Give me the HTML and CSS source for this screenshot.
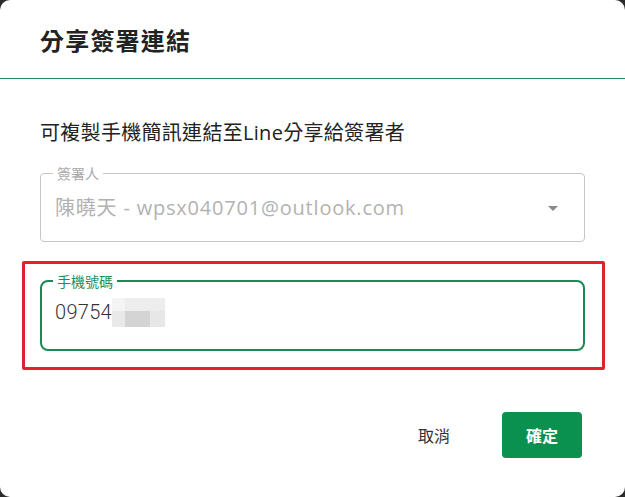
FILE: index.html
```html
<!DOCTYPE html>
<html lang="zh-Hant">
<head>
<meta charset="utf-8">
<title>分享簽署連結</title>
<link rel="stylesheet" href="styles.css">
</head>
<body>
<div class="dialog">
  <header class="dialog-header">
    <h2 class="dialog-title">分享簽署連結</h2>
  </header>
  <main class="dialog-body">
    <p class="hint">可複製手機簡訊連結至Line分享給簽署者</p>
    <fieldset class="field field-select">
      <legend class="field-label">簽署人</legend>
      <div class="field-row">
        <span class="select-value">陳曉天 - wpsx040701@outlook.com</span>
        <span class="caret"></span>
      </div>
    </fieldset>
    <div class="highlight">
      <fieldset class="field field-phone">
        <legend class="field-label">手機號碼</legend>
        <div class="field-row">
          <span class="phone-value">09754</span><span class="mosaic"><i class="m1"></i><i class="m2"></i><i class="m3"></i><i class="m4"></i><i class="m5"></i></span>
        </div>
      </fieldset>
    </div>
  </main>
  <footer class="dialog-actions">
    <button class="btn btn-text" type="button">取消</button>
    <button class="btn btn-primary" type="button">確定</button>
  </footer>
</div>
</body>
</html>
```

FILE: styles.css
```css
* { box-sizing: border-box; }
html, body { margin: 0; padding: 0; }
body {
  background: #2b2b2b;
  width: 625px;
  height: 497px;
  overflow: hidden;
  font-family: "Open Sans", "Noto Sans CJK TC", sans-serif;
}
.dialog {
  width: 625px;
  height: 497px;
  background: #fff;
  border-radius: 10px;
  display: flex;
  flex-direction: column;
}
.dialog-header {
  height: 79px;
  padding: 24px 40px 0;
  border-bottom: 1px solid #1e8c57;
}
.dialog-title {
  margin: 0;
  font-family: "Noto Sans CJK TC", sans-serif;
  font-size: 24px;
  line-height: 32px;
  font-weight: 700;
  color: #222;
  letter-spacing: 1.2px;
}
.dialog-body {
  padding: 0 40px;
  display: flex;
  flex-direction: column;
}
.hint {
  margin: 40px 0 19px;
  font-size: 20px;
  line-height: 28px;
  color: #222;
  letter-spacing: 0.3px;
  font-family: "Open Sans", "Noto Sans CJK TC", sans-serif;
}
.field {
  margin: 0;
  padding: 0;
  min-width: 0;
}
.field-label {
  margin-left: 12px;
  padding: 0 4px;
  font-family: "Noto Sans CJK TC", sans-serif;
  font-size: 14px;
  line-height: 14px;
}
.field-select {
  border: 1px solid #c6c6c6;
  border-radius: 4px;
  width: 545px;
}
.field-select .field-label { color: #a9a9a9; }
.field-select .field-row {
  height: 61px;
  padding: 16px 26px 0 14px;
  display: flex;
  align-items: flex-start;
  justify-content: space-between;
}
.select-value {
  font-size: 20px;
  line-height: 24px;
  color: #b2b2b2;
  letter-spacing: 0.8px;
}
.caret {
  margin-top: 10px;
  width: 0;
  height: 0;
  border-left: 5px solid transparent;
  border-right: 5px solid transparent;
  border-top: 5px solid #8a8a8a;
}
.highlight {
  margin: 19px -20px 0 -18px;
  border: 3px solid #e0212f;
  border-radius: 2px;
  padding: 10px 17px 16px 15px;
}
.field-phone {
  border: 2px solid #1a8a52;
  border-radius: 8px;
}
.field-phone .field-label { color: #1a9058; margin-left: 11px; }
.field-phone .field-row {
  height: 61px;
  padding: 12px 13px 0;
  display: flex;
  align-items: flex-start;
}
.phone-value {
  font-family: Roboto, "Liberation Sans", Arial, sans-serif;
  font-weight: 300;
  font-size: 20px;
  line-height: 24px;
  color: #333;
  letter-spacing: 0.3px;
}
.mosaic {
  display: grid;
  grid-template-columns: 13px 25px 15px;
  grid-template-rows: 13px 16px;
  margin-top: -2px;
}
.mosaic i { display: block; }
.mosaic .m1 { background: #f4f4f4; }
.mosaic .m2 { background: #ededed; grid-column: 2 / 4; }
.mosaic .m3 { background: #e9e9e9; }
.mosaic .m4 { background: #d4d4d4; }
.mosaic .m5 { background: #e7e7e7; }
.dialog-actions {
  margin-top: 42px;
  padding: 0 43px 0 0;
  display: flex;
  justify-content: flex-end;
  gap: 36px;
}
.btn {
  height: 46px;
  border: none;
  font-family: "Noto Sans CJK TC", sans-serif;
  font-size: 16px;
  cursor: pointer;
  border-radius: 4px;
}
.btn-text {
  background: transparent;
  color: #333;
  padding: 0 16px;
  width: 64px;
}
.btn-primary {
  background: #0b914f;
  color: #fff;
  font-weight: 700;
  width: 80px;
  padding: 0;
}
```
